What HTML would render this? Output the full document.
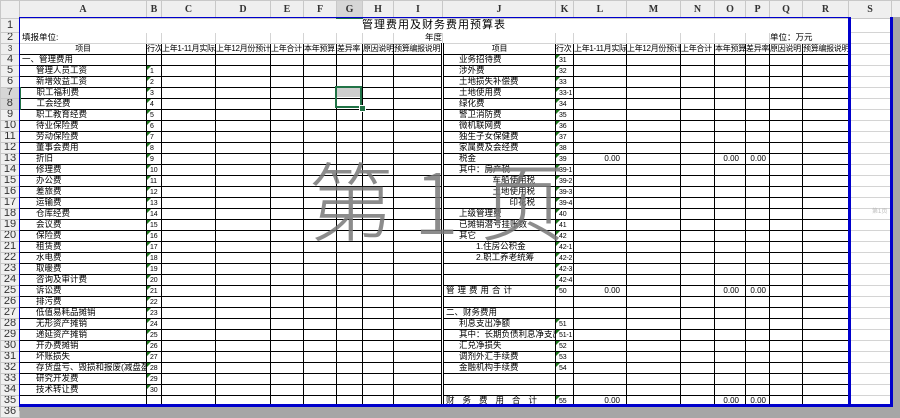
<!DOCTYPE html>
<html><head><meta charset="utf-8"><style>
html,body{margin:0;padding:0;width:900px;height:411px;overflow:hidden;background:#fff;font-family:"Liberation Sans","Noto Sans CJK SC",sans-serif;}
table{position:absolute;left:0;top:0;border-collapse:collapse;table-layout:fixed;width:900px;}
td{padding:0;border:1px solid #d4d4d4;font-size:8.5px;line-height:9px;height:10px;white-space:nowrap;overflow:hidden;color:#000;}
tr.hd td{height:16px;background:#efefef;border-color:#c8c8c8;text-align:center;font-size:10px;color:#333;font-family:"Liberation Serif",serif;font-weight:bold;}
td.h{background:#efefef;border-color:#c8c8c8;text-align:center;font-size:11px;color:#333;font-family:"Liberation Sans",sans-serif;}
td.hs{background:#d6d6d6;border-right:2px solid #217346;}
tr.hd td.gs{background:#d6d6d6;border-bottom:2px solid #217346;}
tr.b td:nth-child(n+2):nth-child(-n+19){border-color:#000;}
tr.b td:nth-child(11){border-left:3px double #000;}
tr.r3 td{font-size:8px;letter-spacing:-0.3px;}
td.a{padding-left:16px;}
td.a0{padding-left:2px;}
td.j{padding-left:15px;}
td.jr{text-align:right;padding-right:20px;}
td.ji{padding-left:32px;}
td.c{text-align:center;}
td.t{position:relative;font-size:7px;vertical-align:bottom;padding-left:3px;line-height:8px;letter-spacing:-0.2px;}
td.t::before{content:"";position:absolute;left:0;top:0;border-top:4px solid #1e7a1e;border-right:4px solid transparent;}
td.n{text-align:right;padding-right:6px;font-size:8px;}
td.z{background:#a6a6a6;border-color:#a6a6a6;}
.wm{position:absolute;color:rgba(120,120,120,0.85);font-family:"Noto Sans CJK SC",sans-serif;font-weight:300;font-size:86px;line-height:86px;}
.bl{position:absolute;background:#0000cc;}
</style></head><body>
<table>
<colgroup><col style="width:19px"><col style="width:127px"><col style="width:15px"><col style="width:54px"><col style="width:55px"><col style="width:33px"><col style="width:33px"><col style="width:26px"><col style="width:31px"><col style="width:49px"><col style="width:113px"><col style="width:18px"><col style="width:53px"><col style="width:54px"><col style="width:34px"><col style="width:31px"><col style="width:24px"><col style="width:33px"><col style="width:46px"><col style="width:43px"><col style="width:9px"></colgroup>
<tr class="hd"><td></td><td>A</td><td>B</td><td>C</td><td>D</td><td>E</td><td>F</td><td class="gs">G</td><td>H</td><td>I</td><td>J</td><td>K</td><td>L</td><td>M</td><td>N</td><td>O</td><td>P</td><td>Q</td><td>R</td><td>S</td><td class="z"></td></tr>
<tr style="height:14px"><td class="h" style="height:13px">1</td><td colspan="18" style="border-color:#fff;text-align:center;font-size:11px;letter-spacing:1px;padding-left:0px">管理费用及财务费用预算表</td><td></td><td class="z"></td></tr>
<tr><td class="h">2</td><td class="a0">填报单位:</td><td></td><td></td><td></td><td></td><td></td><td></td><td></td><td style="text-align:right">年度</td><td></td><td></td><td></td><td></td><td></td><td></td><td></td><td colspan="2">单位：万元</td><td></td><td class="z"></td></tr>
<tr class="b r3"><td class="h">3</td><td class="c">项目</td><td>行次</td><td>上年1-11月实际</td><td>上年12月份预计</td><td>上年合计</td><td>本年预算</td><td>差异率</td><td>原因说明</td><td>预算编报说明</td><td class="c">项目</td><td>行次</td><td>上年1-11月实际</td><td>上年12月份预计</td><td>上年合计</td><td>本年预算</td><td>差异率</td><td>原因说明</td><td>预算编报说明</td><td></td><td class="z"></td></tr>
<tr class="b"><td class="h">4</td><td class="a0">一、管理费用</td><td></td><td></td><td></td><td></td><td></td><td></td><td></td><td></td><td class="j">业务招待费</td><td class="t">31</td><td></td><td></td><td></td><td></td><td></td><td></td><td></td><td></td><td class="z"></td></tr>
<tr class="b"><td class="h">5</td><td class="a">管理人员工资</td><td class="t">1</td><td></td><td></td><td></td><td></td><td></td><td></td><td></td><td class="j">涉外费</td><td class="t">32</td><td></td><td></td><td></td><td></td><td></td><td></td><td></td><td></td><td class="z"></td></tr>
<tr class="b"><td class="h">6</td><td class="a">新增效益工资</td><td class="t">2</td><td></td><td></td><td></td><td></td><td></td><td></td><td></td><td class="j">土地损失补偿费</td><td class="t">33</td><td></td><td></td><td></td><td></td><td></td><td></td><td></td><td></td><td class="z"></td></tr>
<tr class="b"><td class="h hs">7</td><td class="a">职工福利费</td><td class="t">3</td><td></td><td></td><td></td><td></td><td></td><td></td><td></td><td class="j">土地使用费</td><td class="t">33-1</td><td></td><td></td><td></td><td></td><td></td><td></td><td></td><td></td><td class="z"></td></tr>
<tr class="b"><td class="h hs">8</td><td class="a">工会经费</td><td class="t">4</td><td></td><td></td><td></td><td></td><td></td><td></td><td></td><td class="j">绿化费</td><td class="t">34</td><td></td><td></td><td></td><td></td><td></td><td></td><td></td><td></td><td class="z"></td></tr>
<tr class="b"><td class="h">9</td><td class="a">职工教育经费</td><td class="t">5</td><td></td><td></td><td></td><td></td><td></td><td></td><td></td><td class="j">警卫消防费</td><td class="t">35</td><td></td><td></td><td></td><td></td><td></td><td></td><td></td><td></td><td class="z"></td></tr>
<tr class="b"><td class="h">10</td><td class="a">待业保险费</td><td class="t">6</td><td></td><td></td><td></td><td></td><td></td><td></td><td></td><td class="j">微机联网费</td><td class="t">36</td><td></td><td></td><td></td><td></td><td></td><td></td><td></td><td></td><td class="z"></td></tr>
<tr class="b"><td class="h">11</td><td class="a">劳动保险费</td><td class="t">7</td><td></td><td></td><td></td><td></td><td></td><td></td><td></td><td class="j">独生子女保健费</td><td class="t">37</td><td></td><td></td><td></td><td></td><td></td><td></td><td></td><td></td><td class="z"></td></tr>
<tr class="b"><td class="h">12</td><td class="a">董事会费用</td><td class="t">8</td><td></td><td></td><td></td><td></td><td></td><td></td><td></td><td class="j">家属费及会经费</td><td class="t">38</td><td></td><td></td><td></td><td></td><td></td><td></td><td></td><td></td><td class="z"></td></tr>
<tr class="b"><td class="h">13</td><td class="a">折旧</td><td class="t">9</td><td></td><td></td><td></td><td></td><td></td><td></td><td></td><td class="j">税金</td><td class="t">39</td><td class="n">0.00</td><td></td><td></td><td class="n">0.00</td><td class="n" style="padding-right:3px">0.00</td><td></td><td></td><td></td><td class="z"></td></tr>
<tr class="b"><td class="h">14</td><td class="a">修理费</td><td class="t">10</td><td></td><td></td><td></td><td></td><td></td><td></td><td></td><td class="j">其中：房产税</td><td class="t">39-1</td><td></td><td></td><td></td><td></td><td></td><td></td><td></td><td></td><td class="z"></td></tr>
<tr class="b"><td class="h">15</td><td class="a">办公费</td><td class="t">11</td><td></td><td></td><td></td><td></td><td></td><td></td><td></td><td class="jr">车船使用税</td><td class="t">39-2</td><td></td><td></td><td></td><td></td><td></td><td></td><td></td><td></td><td class="z"></td></tr>
<tr class="b"><td class="h">16</td><td class="a">差旅费</td><td class="t">12</td><td></td><td></td><td></td><td></td><td></td><td></td><td></td><td class="jr">土地使用税</td><td class="t">39-3</td><td></td><td></td><td></td><td></td><td></td><td></td><td></td><td></td><td class="z"></td></tr>
<tr class="b"><td class="h">17</td><td class="a">运输费</td><td class="t">13</td><td></td><td></td><td></td><td></td><td></td><td></td><td></td><td class="jr">印花税</td><td class="t">39-4</td><td></td><td></td><td></td><td></td><td></td><td></td><td></td><td></td><td class="z"></td></tr>
<tr class="b"><td class="h">18</td><td class="a">仓库经费</td><td class="t">14</td><td></td><td></td><td></td><td></td><td></td><td></td><td></td><td class="j">上级管理费</td><td class="t">40</td><td></td><td></td><td></td><td></td><td></td><td></td><td></td><td></td><td class="z"></td></tr>
<tr class="b"><td class="h">19</td><td class="a">会议费</td><td class="t">15</td><td></td><td></td><td></td><td></td><td></td><td></td><td></td><td class="j">已摊销潜亏挂账数</td><td class="t">41</td><td></td><td></td><td></td><td></td><td></td><td></td><td></td><td></td><td class="z"></td></tr>
<tr class="b"><td class="h">20</td><td class="a">保险费</td><td class="t">16</td><td></td><td></td><td></td><td></td><td></td><td></td><td></td><td class="j">其它</td><td class="t">42</td><td></td><td></td><td></td><td></td><td></td><td></td><td></td><td></td><td class="z"></td></tr>
<tr class="b"><td class="h">21</td><td class="a">租赁费</td><td class="t">17</td><td></td><td></td><td></td><td></td><td></td><td></td><td></td><td class="ji">1.住房公积金</td><td class="t">42-1</td><td></td><td></td><td></td><td></td><td></td><td></td><td></td><td></td><td class="z"></td></tr>
<tr class="b"><td class="h">22</td><td class="a">水电费</td><td class="t">18</td><td></td><td></td><td></td><td></td><td></td><td></td><td></td><td class="ji">2.职工养老统筹</td><td class="t">42-2</td><td></td><td></td><td></td><td></td><td></td><td></td><td></td><td></td><td class="z"></td></tr>
<tr class="b"><td class="h">23</td><td class="a">取暖费</td><td class="t">19</td><td></td><td></td><td></td><td></td><td></td><td></td><td></td><td></td><td class="t">42-3</td><td></td><td></td><td></td><td></td><td></td><td></td><td></td><td></td><td class="z"></td></tr>
<tr class="b"><td class="h">24</td><td class="a">咨询及审计费</td><td class="t">20</td><td></td><td></td><td></td><td></td><td></td><td></td><td></td><td></td><td class="t">42-4</td><td></td><td></td><td></td><td></td><td></td><td></td><td></td><td></td><td class="z"></td></tr>
<tr class="b"><td class="h">25</td><td class="a">诉讼费</td><td class="t">21</td><td></td><td></td><td></td><td></td><td></td><td></td><td></td><td class="a0" style="letter-spacing:3px">管理费用合计</td><td class="t">50</td><td class="n">0.00</td><td></td><td></td><td class="n">0.00</td><td class="n" style="padding-right:3px">0.00</td><td></td><td></td><td></td><td class="z"></td></tr>
<tr class="b"><td class="h">26</td><td class="a">排污费</td><td class="t">22</td><td></td><td></td><td></td><td></td><td></td><td></td><td></td><td></td><td></td><td></td><td></td><td></td><td></td><td></td><td></td><td></td><td></td><td class="z"></td></tr>
<tr class="b"><td class="h">27</td><td class="a">低值易耗品摊销</td><td class="t">23</td><td></td><td></td><td></td><td></td><td></td><td></td><td></td><td class="a0">二、财务费用</td><td></td><td></td><td></td><td></td><td></td><td></td><td></td><td></td><td></td><td class="z"></td></tr>
<tr class="b"><td class="h">28</td><td class="a">无形资产摊销</td><td class="t">24</td><td></td><td></td><td></td><td></td><td></td><td></td><td></td><td class="j">利息支出净额</td><td class="t">51</td><td></td><td></td><td></td><td></td><td></td><td></td><td></td><td></td><td class="z"></td></tr>
<tr class="b"><td class="h">29</td><td class="a">递延资产摊销</td><td class="t">25</td><td></td><td></td><td></td><td></td><td></td><td></td><td></td><td class="j">其中：长期负债利息净支出</td><td class="t">51-1</td><td></td><td></td><td></td><td></td><td></td><td></td><td></td><td></td><td class="z"></td></tr>
<tr class="b"><td class="h">30</td><td class="a">开办费摊销</td><td class="t">26</td><td></td><td></td><td></td><td></td><td></td><td></td><td></td><td class="j">汇兑净损失</td><td class="t">52</td><td></td><td></td><td></td><td></td><td></td><td></td><td></td><td></td><td class="z"></td></tr>
<tr class="b"><td class="h">31</td><td class="a">坏账损失</td><td class="t">27</td><td></td><td></td><td></td><td></td><td></td><td></td><td></td><td class="j">调剂外汇手续费</td><td class="t">53</td><td></td><td></td><td></td><td></td><td></td><td></td><td></td><td></td><td class="z"></td></tr>
<tr class="b"><td class="h">32</td><td class="a">存货盘亏、毁损和报废(减盘盈)</td><td class="t">28</td><td></td><td></td><td></td><td></td><td></td><td></td><td></td><td class="j">金融机构手续费</td><td class="t">54</td><td></td><td></td><td></td><td></td><td></td><td></td><td></td><td></td><td class="z"></td></tr>
<tr class="b"><td class="h">33</td><td class="a">研究开发费</td><td class="t">29</td><td></td><td></td><td></td><td></td><td></td><td></td><td></td><td></td><td></td><td></td><td></td><td></td><td></td><td></td><td></td><td></td><td></td><td class="z"></td></tr>
<tr class="b"><td class="h">34</td><td class="a">技术转让费</td><td class="t">30</td><td></td><td></td><td></td><td></td><td></td><td></td><td></td><td></td><td></td><td></td><td></td><td></td><td></td><td></td><td></td><td></td><td></td><td class="z"></td></tr>
<tr class="b"><td class="h">35</td><td></td><td></td><td></td><td></td><td></td><td></td><td></td><td></td><td></td><td class="a0" style="letter-spacing:8px">财务费用合计</td><td class="t">55</td><td class="n">0.00</td><td></td><td></td><td class="n">0.00</td><td class="n" style="padding-right:3px">0.00</td><td></td><td></td><td></td><td class="z"></td></tr>
<tr><td class="h">36</td><td colspan="20" style="background:#a6a6a6;border-color:#a6a6a6"></td></tr>
</table>
<div class="bl" style="left:19px;top:17px;width:830px;height:1px"></div>
<div class="bl" style="left:19px;top:17px;width:1px;height:390px"></div>
<div class="bl" style="left:848px;top:17px;width:3px;height:390px"></div>
<div class="bl" style="left:890px;top:17px;width:3px;height:390px"></div>
<div class="bl" style="left:19px;top:404px;width:874px;height:3px"></div>
<div style="position:absolute;left:893px;top:17px;width:7px;height:394px;background:#a6a6a6"></div>
<div style="position:absolute;left:19px;top:407px;width:881px;height:4px;background:#a6a6a6"></div>
<div style="position:absolute;left:337px;top:88px;width:23px;height:9px;background:#cfcfcf"></div>
<div style="position:absolute;left:335px;top:86px;width:23px;height:18px;border:2px solid #217346"></div>
<div style="position:absolute;left:359px;top:105px;width:5px;height:5px;background:#217346;border:1px solid #fff"></div>
<div class="wm" style="left:308px;top:154px">第</div>
<div class="wm" style="left:413px;top:154px">1</div>
<div class="wm" style="left:480px;top:154px">页</div>
<div style="position:absolute;left:872px;top:206px;font-size:6px;color:#bbb">第1页</div>
</body></html>
